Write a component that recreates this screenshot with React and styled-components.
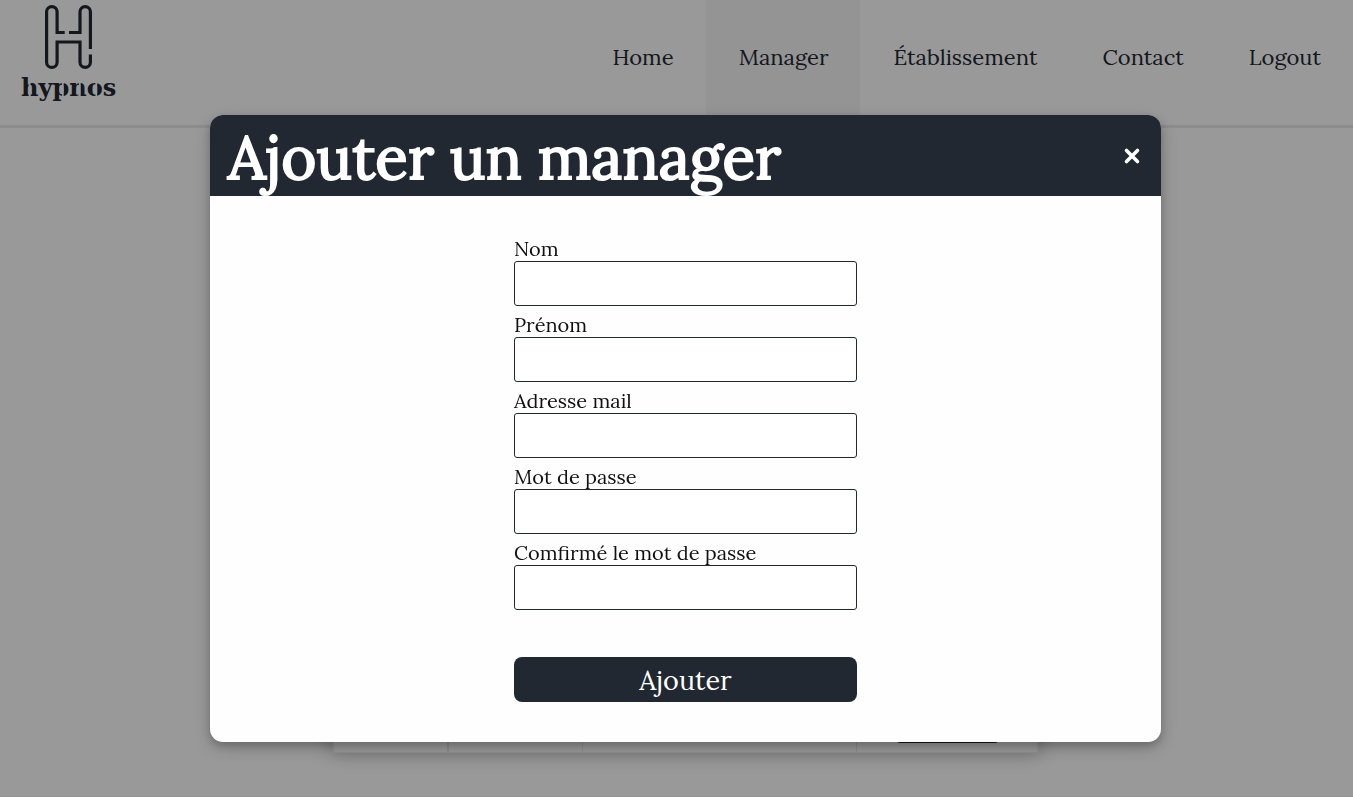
import React from "react";
import styled, { createGlobalStyle } from "styled-components";

const dark = "#222831";
const serif = `Lora, "Liberation Serif", serif`;

const GlobalStyle = createGlobalStyle`
  *, *::before, *::after { box-sizing: border-box; }
  body { margin: 0; background: #fff; font-family: ${serif}; color: ${dark}; }
`;

const Page = styled.div`
  display: flex;
  flex-direction: column;
  min-height: 100vh;
  border-bottom: 1px solid #f2f2f2;
`;

const Header = styled.header`
  display: flex;
  justify-content: space-between;
  height: 128px;
  border-bottom: 3px solid #eaeaea;
`;

const LogoLink = styled.a`
  display: block;
  padding-left: 20px;
`;

const Nav = styled.nav`
  display: flex;
`;

const NavLink = styled.a`
  display: flex;
  align-items: center;
  padding: 0 32px 12px 33px;
  font-size: 22px;
  color: ${dark};
  text-decoration: none;
  background: ${(p) => (p.$active ? "#f7f7f7" : "transparent")};
`;

const Main = styled.main`
  display: flex;
  flex: 1;
  justify-content: center;
  align-items: flex-end;
  padding: 0 0 43px 18px;
`;

const ManagerTable = styled.table`
  width: 707px;
  table-layout: fixed;
  border-collapse: separate;
  border-spacing: 0;
  border: solid #efefef;
  border-width: 0 2px 1px;
  box-shadow: 0 0 20px rgba(0, 0, 0, 0.3);
`;

const Cell = styled.td`
  width: ${(p) => p.$width}px;
  height: 56px;
  padding: 0 38px 9px;
  vertical-align: bottom;
  border-left: ${(p) => p.$line || 0}px solid #eaeaea;
`;

const RowButton = styled.button`
  display: block;
  width: 105px;
  height: 36px;
  padding: 0;
  border: 0;
  border-radius: 5px;
  background: ${dark};
`;

const Overlay = styled.div`
  position: fixed;
  inset: 0;
  overflow: auto;
  padding: 115px 192px 55px 210px;
  background: rgba(0, 0, 0, 0.4);
`;

const Modal = styled.section`
  border-radius: 13px;
  background: #fefefe;
  overflow: hidden;
  box-shadow: 0 4px 8px rgba(0, 0, 0, 0.2), 0 6px 20px rgba(0, 0, 0, 0.19);
`;

const ModalHeader = styled.div`
  display: flex;
  align-items: center;
  justify-content: space-between;
  height: 81px;
  padding: 0 18px;
  background: ${dark};
  color: #fff;
`;

const Title = styled.h1`
  margin: 0;
  padding-top: 2px;
  font-size: 60px;
  line-height: 72px;
  font-weight: 400;
  -webkit-text-stroke: 2px currentColor;
`;

const CloseButton = styled.button`
  display: flex;
  padding: 2px;
  border: 0;
  background: none;
  color: #fff;
  cursor: pointer;
`;

const Form = styled.form`
  display: flex;
  flex-direction: column;
  gap: 7px;
  width: 343px;
  margin: 0 auto;
  padding: 41px 0 40px;
`;

const Field = styled.div`
  display: flex;
  flex-direction: column;
`;

const Label = styled.label`
  font-size: 20px;
  line-height: 24px;
  color: #111;
`;

const Input = styled.input`
  height: 45px;
  padding: 0 10px;
  border: 1px solid ${dark};
  border-radius: 3px;
  background: #fff;
  font: 20px ${serif};
`;

const Submit = styled.button`
  height: 45px;
  margin-top: 40px;
  padding: 0;
  border: 0;
  border-radius: 8px;
  background: ${dark};
  color: #fff;
  font: 27px ${serif};
  cursor: pointer;
`;

const links = ["Home", "Manager", "Établissement", "Contact", "Logout"];

const fields = [
  { id: "nom", label: "Nom", type: "text" },
  { id: "prenom", label: "Prénom", type: "text" },
  { id: "mail", label: "Adresse mail", type: "email" },
  { id: "password", label: "Mot de passe", type: "password" },
  { id: "confirm", label: "Comfirmé le mot de passe", type: "password" },
];

function Logo() {
  return (
    <svg width="100" height="108" viewBox="20 0 100 108" fill="none">
      <path
        d="M64.7 32.5H57.1V11.8A5.25 5.25 0 0 0 46.6 11.8V62.2A5.25 5.25 0 0 0 57.1 62.2V42H80V62.2A5.2 5.2 0 0 0 90.4 62.2V54.5M90.4 49V11.8A5.2 5.2 0 0 0 80 11.8V32.5H69"
        stroke={dark}
        strokeWidth="3.2"
      />
      <text x="21" y="96" fill={dark} fontFamily="'DejaVu Serif', serif" fontWeight="700" fontSize="24">
        hypnos
      </text>
      {/* stencil cuts through h, p, n and o */}
      <path d="M29.6 82V98M62.8 82V98M79.8 82V98M96.3 82V98" stroke="#fff" strokeWidth="1.8" />
    </svg>
  );
}

export default function App() {
  return (
    <>
      <GlobalStyle />
      <Page>
        <Header>
          <LogoLink href="#home" aria-label="hypnos">
            <Logo />
          </LogoLink>
          <Nav>
            {links.map((name) => (
              <NavLink key={name} href={`#${name.toLowerCase()}`} $active={name === "Manager"}>
                {name}
              </NavLink>
            ))}
          </Nav>
        </Header>
        <Main>
          <ManagerTable>
            <tbody>
              <tr>
                <Cell $width={113} />
                <Cell $width={135} $line={2} />
                <Cell $width={274} $line={1} />
                <Cell $width={181} $line={1}>
                  <RowButton type="button" aria-label="Supprimer" />
                </Cell>
              </tr>
            </tbody>
          </ManagerTable>
        </Main>
      </Page>
      <Overlay>
        <Modal role="dialog" aria-modal="true" aria-labelledby="modal-title">
          <ModalHeader>
            <Title id="modal-title">Ajouter un manager</Title>
            <CloseButton type="button" aria-label="Fermer">
              <svg width="18" height="18" viewBox="0 0 18 18" fill="none">
                <path
                  d="M3.5 3.5L14.5 14.5M14.5 3.5L3.5 14.5"
                  stroke="currentColor"
                  strokeWidth="3.6"
                  strokeLinecap="round"
                />
              </svg>
            </CloseButton>
          </ModalHeader>
          <Form>
            {fields.map((f) => (
              <Field key={f.id}>
                <Label htmlFor={f.id}>{f.label}</Label>
                <Input id={f.id} type={f.type} />
              </Field>
            ))}
            <Submit type="submit">Ajouter</Submit>
          </Form>
        </Modal>
      </Overlay>
    </>
  );
}
